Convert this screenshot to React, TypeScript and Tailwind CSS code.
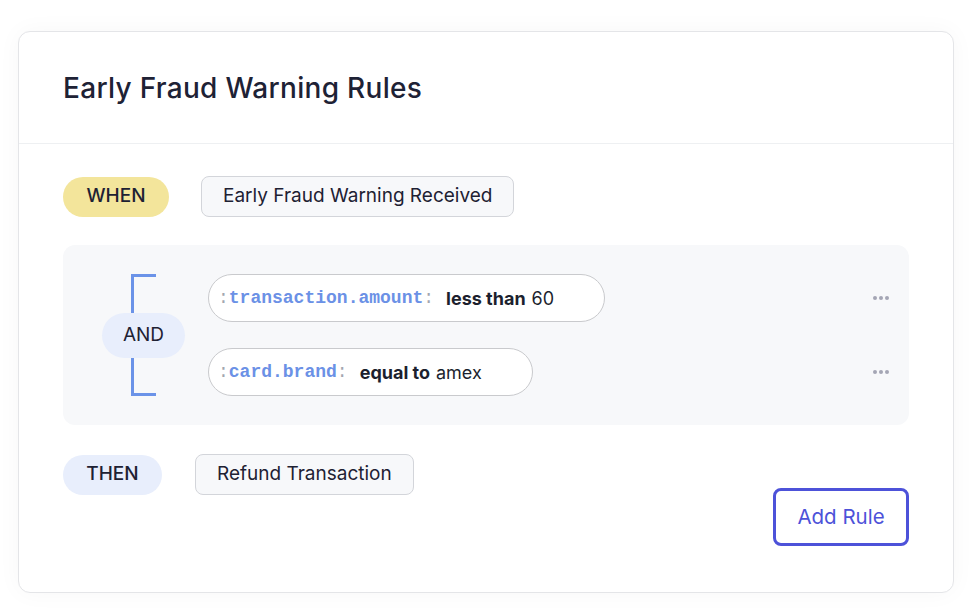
import React from "react";

const conditions = [
  { field: "transaction.amount", op: "less than", value: "60" },
  { field: "card.brand", op: "equal to", value: "amex" },
];

const MoreDots = () => (
  <div className="flex items-center gap-[2px]">
    <span className="w-1 h-1 rounded-full bg-[#a4a6b4]" />
    <span className="w-1 h-1 rounded-full bg-[#a4a6b4]" />
    <span className="w-1 h-1 rounded-full bg-[#a4a6b4]" />
  </div>
);

const ConditionPill: React.FC<{ field: string; op: string; value: string }> = ({
  field,
  op,
  value,
}) => (
  <div className="flex items-center justify-between pr-[20px]">
    <div className="flex items-center h-[48px] rounded-full border border-[#c9cacd] bg-white pl-[9px] pr-[50px] text-[18px]">
      <span className="font-['Liberation_Mono',monospace] text-[18px]">
        <span className="text-[#a3a6b0]">:</span>
        <span className="font-bold text-[#6b91e6]">{field}</span>
        <span className="text-[#a3a6b0]">:</span>
      </span>
      <span className="ml-[12px] font-bold text-[#1c1f2e]">{op}</span>
      <span className="ml-[6px] text-[#1c1f2e]">{value}</span>
    </div>
    <MoreDots />
  </div>
);

export default function App() {
  return (
    <div className="min-h-screen bg-white pl-[18px] pr-[22px] pt-[31px] font-['Inter',sans-serif] text-[#1e2133]">
      <div className="h-[562px] rounded-[12px] border border-[#e4e5e8] bg-white shadow-[0_0_24px_rgba(0,0,0,0.035)] flex flex-col">
        <div className="h-[112px] flex items-center px-[44px] border-b border-[#eef0f2]">
          <h1 className="text-[28px] font-medium tracking-[0.3px] text-[#1e2235]">
            Early Fraud Warning Rules
          </h1>
        </div>

        <div className="px-[44px] pt-[32px]">
          <div className="flex items-center gap-[32px]">
            <span className="w-[106px] h-[40px] flex items-center justify-center rounded-full bg-[#f3e59b] text-[19px] font-medium">
              WHEN
            </span>
            <span className="h-[41px] flex items-center px-[21px] rounded-[8px] border border-[#d3d5da] bg-[#f7f8fa] text-[19px]">
              Early Fraud Warning Received
            </span>
          </div>

          <div className="mt-[28px] h-[180px] rounded-[12px] bg-[#f7f8fa] flex items-stretch pl-[39px] py-[29px]">
            <div className="w-[83px] flex flex-col">
              <div className="flex-1 ml-[29px] w-[25px] border-l-[3px] border-t-[3px] border-[#6b93e8]" />
              <span className="h-[45px] flex items-center justify-center rounded-full bg-[#e8eefc] text-[19px]">
                AND
              </span>
              <div className="flex-1 ml-[29px] w-[25px] border-l-[3px] border-b-[3px] border-[#6b93e8]" />
            </div>
            <div className="flex-1 ml-[23px] flex flex-col justify-between">
              {conditions.map((c) => (
                <ConditionPill key={c.field} {...c} />
              ))}
            </div>
          </div>

          <div className="mt-[28px] flex items-start justify-between">
            <div className="flex items-center gap-[33px] mt-[1px]">
              <span className="w-[99px] h-[40px] flex items-center justify-center rounded-full bg-[#e8eefc] text-[19px] font-medium">
                THEN
              </span>
              <span className="h-[41px] flex items-center px-[21px] rounded-[8px] border border-[#d3d5da] bg-[#f7f8fa] text-[19px]">
                Refund Transaction
              </span>
            </div>
            <button className="mt-[35px] w-[136px] h-[58px] rounded-[8px] border-[3px] border-[#4d52d9] bg-white text-[20.5px] text-[#4d52d9]">
              Add Rule
            </button>
          </div>
        </div>
      </div>
    </div>
  );
}
